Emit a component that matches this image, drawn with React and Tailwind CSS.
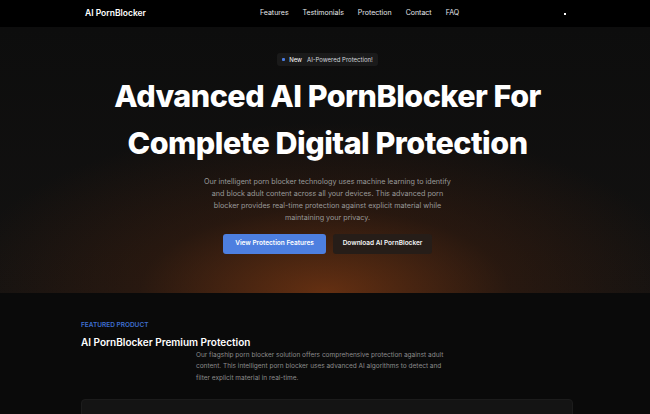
export default function App() {
  const links = ['Features', 'Testimonials', 'Protection', 'Contact', 'FAQ'];
  return (
    <div className="min-h-screen bg-[#0a0a0a] text-white" style={{ fontFamily: 'Inter, "Noto Sans", sans-serif' }}>
      <nav className="h-[27px] bg-black">
        <div className="w-[492px] ml-[calc(50%-243px)] h-full flex items-center px-[3px]">
          <span className="text-[8.5px] font-semibold">AI PornBlocker</span>
          <div className="flex gap-[14px] text-[7px] text-gray-200 ml-[114px]">
            {links.map((l) => (
              <span key={l}>{l}</span>
            ))}
          </div>
          <span className="ml-auto mr-[5px] w-[2px] h-[2px] bg-white" />
        </div>
      </nav>

      <section
        className="h-[266px] flex flex-col items-center pt-[26px] pl-[5px]"
        style={{
          background:
            'radial-gradient(ellipse 370px 170px at 50% 100%, rgba(135,60,18,0.7), rgba(80,36,14,0.35) 50%, rgba(0,0,0,0) 100%), linear-gradient(#0d0d0d, #131211)',
        }}
      >
        <div className="flex items-center gap-[4px] h-[13px] px-[5px] rounded-[3px] bg-[#1a1a1a] text-[6px]">
          <span className="w-[3px] h-[3px] rounded-[1px] bg-[#4a7be0]" />
          <span className="text-white">New</span>
          <span className="text-gray-300 ml-[1px]">AI-Powered Protection!</span>
        </div>
        <h1 className="mt-[6px] text-center text-[30.5px] leading-[47px] font-extrabold tracking-[-0.5px]">
          Advanced AI PornBlocker For
          <br />
          Complete Digital Protection
        </h1>
        <p className="mt-[10px] w-[252px] text-center text-[7.2px] leading-[12px] text-[#9a9a9a]">
          Our intelligent porn blocker technology uses machine learning to identify and block adult content across all your devices. This advanced porn blocker provides real-time protection against explicit material while maintaining your privacy.
        </p>
        <div className="mt-[10px] flex gap-[7px]">
          <button className="h-[20px] w-[103px] rounded-[3px] bg-[#4d7fe0] text-[6.5px] font-semibold text-white">
            View Protection Features
          </button>
          <button className="h-[20px] w-[99px] rounded-[3px] bg-[#261d18] text-[6.5px] font-semibold text-gray-100">
            Download AI PornBlocker
          </button>
        </div>
      </section>

      <section className="pt-[28px]">
        <div className="w-[492px] ml-[calc(50%-244px)]">
          <div className="text-[6.5px] font-semibold text-[#3f6fd0] uppercase">Featured Product</div>
          <h2 className="mt-[4px] text-[10px] font-semibold">AI PornBlocker Premium Protection</h2>
          <p className="ml-[115px] w-[252px] text-[6.5px] leading-[11.5px] text-[#8c8c8c]">
            Our flagship porn blocker solution offers comprehensive protection against adult content. This intelligent porn blocker uses advanced AI algorithms to detect and filter explicit material in real-time.
          </p>
          <div className="mt-[15px] h-[40px] rounded-[4px] bg-[#141414] border border-[#1c1c1c]" />
        </div>
      </section>
    </div>
  );
}
